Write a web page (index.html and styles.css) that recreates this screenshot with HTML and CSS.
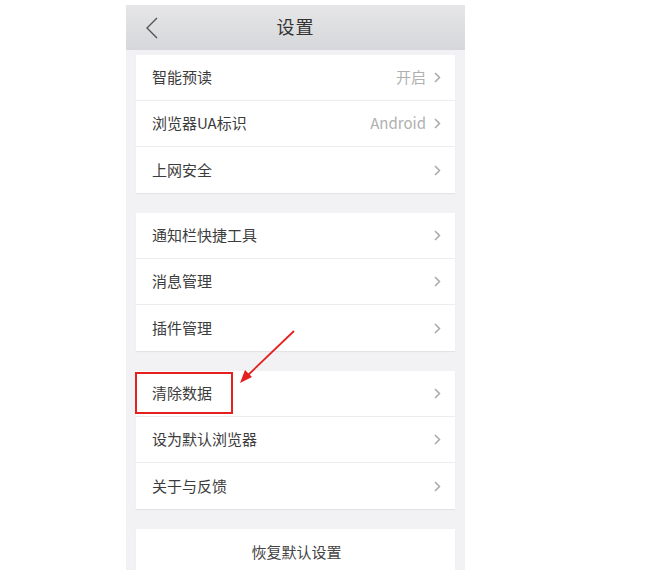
FILE: index.html
```html
<!DOCTYPE html>
<html lang="zh-CN">
<head>
<meta charset="utf-8">
<title>设置</title>
<link rel="stylesheet" href="styles.css">
</head>
<body>
<div class="screen">
  <header class="topbar">
    <svg class="back" width="14" height="22" viewBox="0 0 14 22"><path d="M12 1 L2 11 L12 21" fill="none" stroke="#555" stroke-width="1.4"/></svg>
    <h1 class="title">设置</h1>
  </header>
  <main class="content">
    <section class="card">
      <div class="row"><span class="label">智能预读</span><span class="value">开启</span><svg class="chev" width="7" height="11" viewBox="0 0 7 11"><path d="M1 1 L5.5 5.5 L1 10" fill="none" stroke="#a9a9a9" stroke-width="1.5"/></svg></div>
      <div class="row"><span class="label">浏览器UA标识</span><span class="value">Android</span><svg class="chev" width="7" height="11" viewBox="0 0 7 11"><path d="M1 1 L5.5 5.5 L1 10" fill="none" stroke="#a9a9a9" stroke-width="1.5"/></svg></div>
      <div class="row"><span class="label">上网安全</span><svg class="chev" width="7" height="11" viewBox="0 0 7 11"><path d="M1 1 L5.5 5.5 L1 10" fill="none" stroke="#a9a9a9" stroke-width="1.5"/></svg></div>
    </section>
    <section class="card">
      <div class="row"><span class="label">通知栏快捷工具</span><svg class="chev" width="7" height="11" viewBox="0 0 7 11"><path d="M1 1 L5.5 5.5 L1 10" fill="none" stroke="#a9a9a9" stroke-width="1.5"/></svg></div>
      <div class="row"><span class="label">消息管理</span><svg class="chev" width="7" height="11" viewBox="0 0 7 11"><path d="M1 1 L5.5 5.5 L1 10" fill="none" stroke="#a9a9a9" stroke-width="1.5"/></svg></div>
      <div class="row"><span class="label">插件管理</span><svg class="chev" width="7" height="11" viewBox="0 0 7 11"><path d="M1 1 L5.5 5.5 L1 10" fill="none" stroke="#a9a9a9" stroke-width="1.5"/></svg></div>
    </section>
    <section class="card">
      <div class="row"><span class="label">清除数据</span><svg class="chev" width="7" height="11" viewBox="0 0 7 11"><path d="M1 1 L5.5 5.5 L1 10" fill="none" stroke="#a9a9a9" stroke-width="1.5"/></svg></div>
      <div class="row"><span class="label">设为默认浏览器</span><svg class="chev" width="7" height="11" viewBox="0 0 7 11"><path d="M1 1 L5.5 5.5 L1 10" fill="none" stroke="#a9a9a9" stroke-width="1.5"/></svg></div>
      <div class="row"><span class="label">关于与反馈</span><svg class="chev" width="7" height="11" viewBox="0 0 7 11"><path d="M1 1 L5.5 5.5 L1 10" fill="none" stroke="#a9a9a9" stroke-width="1.5"/></svg></div>
    </section>
    <section class="card">
      <div class="row center"><span class="label">恢复默认设置</span></div>
    </section>
  </main>
  <div class="highlight"></div>
  <svg class="arrow" width="339" height="565" viewBox="0 0 339 565">
    <line x1="168" y1="326" x2="120" y2="372" stroke="#e3211f" stroke-width="1.8"/>
    <path d="M114 378 L119 365 L126 372 Z" fill="#e3211f"/>
  </svg>
</div>
</body>
</html>
```
FILE: styles.css
```css
* { box-sizing: border-box; }
html, body { margin: 0; padding: 0; background: #ffffff; }
body {
  font-family: "Noto Sans CJK SC", "Noto Sans", sans-serif;
  height: 570px;
  overflow: hidden;
}
.screen {
  position: relative;
  width: 339px;
  height: 565px;
  margin: 5px 0 0 126px;
  background: #f2f2f5;
  overflow: hidden;
}
.topbar {
  position: relative;
  height: 45px;
  display: flex;
  align-items: center;
  justify-content: center;
  background: linear-gradient(#e6e6e8, #d6d7da);
}
.back {
  position: absolute;
  left: 19px;
  top: 12px;
}
.title {
  margin: 0 0 3px;
  font-size: 18px;
  font-weight: normal;
  color: #333;
  letter-spacing: 1px;
}
.content {
  display: flex;
  flex-direction: column;
  gap: 20px;
  padding: 5px 10px 0;
}
.card {
  background: #fff;
  box-shadow: 0 1px 1px rgba(0,0,0,0.06);
  display: flex;
  flex-direction: column;
}
.row {
  height: 46px;
  display: flex;
  align-items: center;
  padding: 0 14px 2px 16px;
  border-bottom: 1px solid #ededf0;
}
.row:last-child { border-bottom: none; }
.label {
  flex: 1;
  font-size: 15px;
  color: #3c3c3c;
}
.value {
  font-size: 15px;
  color: #b0b0b0;
  margin-right: 8px;
}
.chev { flex: none; margin-top: 2px; }
.row.center { justify-content: center; }
.row.center .label { flex: none; color: #444; }
.highlight {
  position: absolute;
  left: 9px;
  top: 367px;
  width: 98px;
  height: 42px;
  border: 2px solid #e3211f;
}
.arrow {
  position: absolute;
  left: 0;
  top: 0;
  pointer-events: none;
}
```
